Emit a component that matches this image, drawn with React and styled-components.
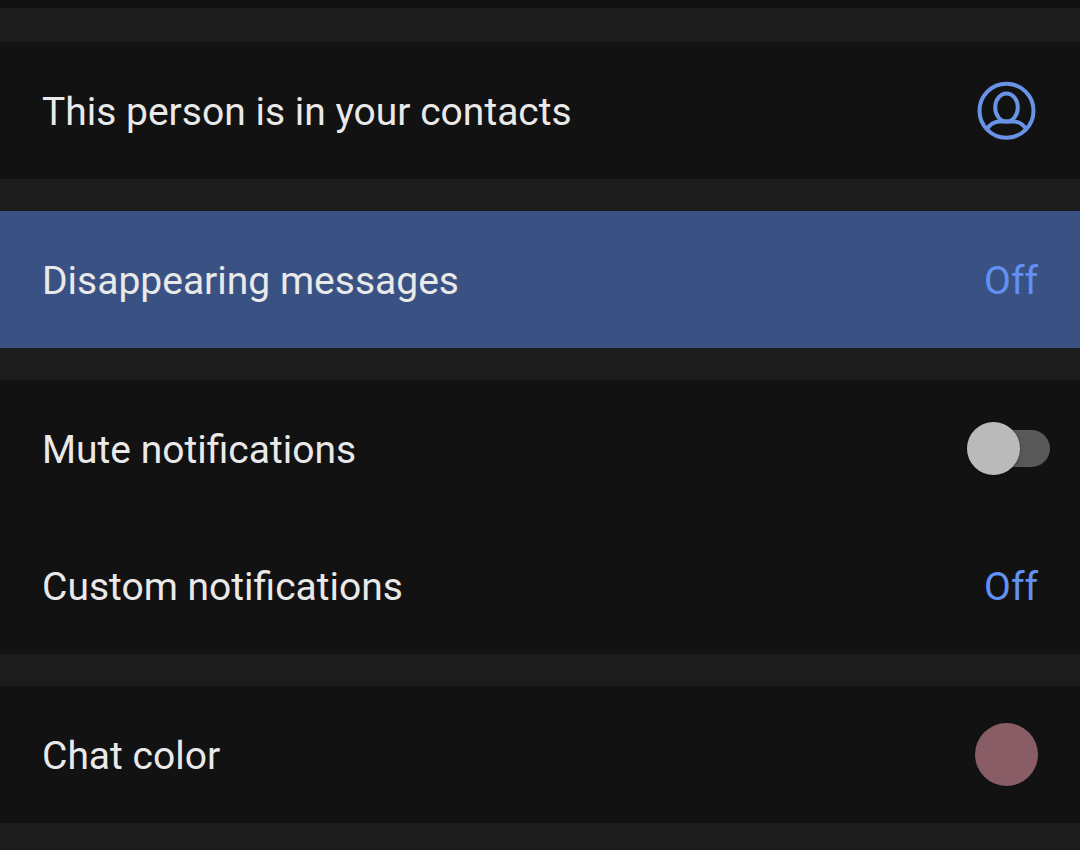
import React from "react";
import styled, { createGlobalStyle } from "styled-components";

const GlobalStyle = createGlobalStyle`
  *, *::before, *::after { box-sizing: border-box; }
  body {
    margin: 0;
    background: #1c1c1c;
    color: #e9e9e9;
    font-family: Roboto, "Liberation Sans", sans-serif;
    font-size: 39px;
    line-height: 48px;
  }
`;

const Page = styled.main`
  display: flex;
  flex-direction: column;
  gap: 32px;
  padding-top: 34px;
  border-top: 8px solid #121212;
`;

const Section = styled.section`
  display: flex;
  flex-direction: column;
  background: #121212;
`;

const Row = styled.div`
  display: flex;
  align-items: center;
  justify-content: space-between;
  width: 100%;
  min-height: 137px;
  padding: 0 42px;
  border: 0;
  background: ${(p) => (p.$active ? "#3a5283" : "transparent")};
  color: inherit;
  font: inherit;
  text-align: left;
`;

const Text = styled.span`
  padding-top: 3px;
  color: ${(p) => (p.$accent ? "#6191f3" : "inherit")};
`;

const Swatch = styled.span`
  width: 63px;
  height: 63px;
  border-radius: 50%;
  background: #895d66;
`;

const Toggle = styled.input`
  appearance: none;
  display: flex;
  align-items: center;
  width: 83px;
  height: 37px;
  margin: 0 -12px 0 0;
  border-radius: 19px;
  background: #595959;

  &::before {
    content: "";
    width: 53px;
    height: 53px;
    flex: none;
    border-radius: 50%;
    background: #bababa;
    box-shadow: 0 1px 3px rgba(0, 0, 0, 0.4);
  }

  &:checked {
    justify-content: flex-end;
  }
`;

function ContactIcon() {
  return (
    <svg width="63" height="60" viewBox="0 0 63 60" fill="none" stroke="#6893e6" strokeWidth="4" aria-hidden="true">
      <circle cx="31.5" cy="29.7" r="27" />
      <ellipse cx="31.5" cy="26.5" rx="11.3" ry="14" />
      <path d="M11.5 48.5C15 43 20 40.5 25 40.5H38C43 40.5 48 43 51.5 48.5" />
    </svg>
  );
}

export default function App() {
  return (
    <>
      <GlobalStyle />
      <Page>
        <Section>
          <Row as="button" type="button">
            <Text>This person is in your contacts</Text>
            <ContactIcon />
          </Row>
        </Section>
        <Section>
          <Row as="button" type="button" $active>
            <Text>Disappearing messages</Text>
            <Text $accent>Off</Text>
          </Row>
        </Section>
        <Section>
          <Row as="label" htmlFor="mute">
            <Text>Mute notifications</Text>
            <Toggle id="mute" type="checkbox" role="switch" />
          </Row>
          <Row as="button" type="button">
            <Text>Custom notifications</Text>
            <Text $accent>Off</Text>
          </Row>
        </Section>
        <Section>
          <Row as="button" type="button">
            <Text>Chat color</Text>
            <Swatch />
          </Row>
        </Section>
      </Page>
    </>
  );
}
